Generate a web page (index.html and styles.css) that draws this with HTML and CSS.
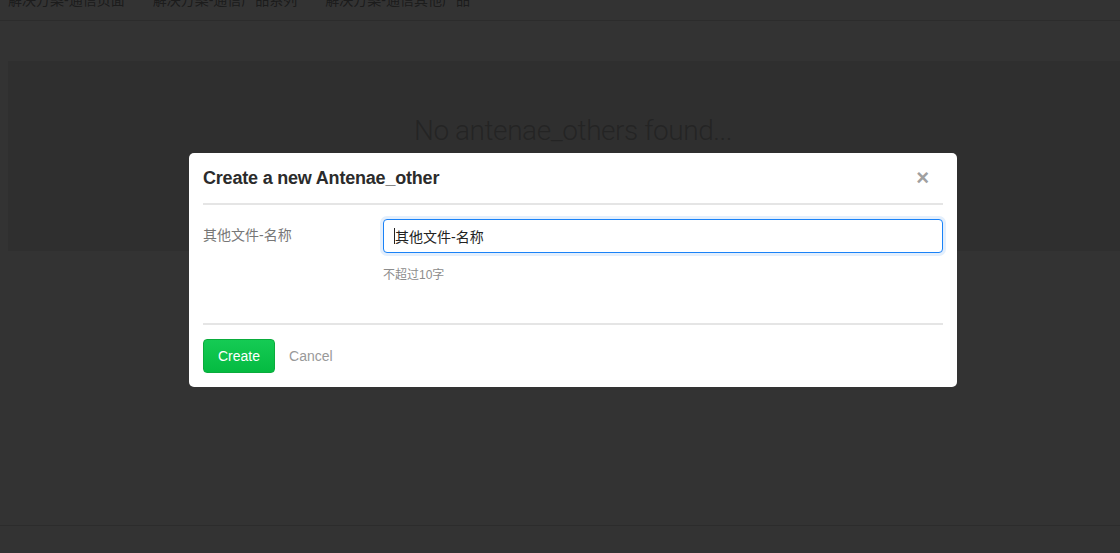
FILE: index.html
```html
<!DOCTYPE html>
<html lang="zh">
<head>
<meta charset="utf-8">
<title>Antenae_others</title>
<link rel="stylesheet" href="styles.css">
</head>
<body>
<div class="page">
  <nav class="topnav">
    <a class="nav-link" href="#">解决方案-通信页面</a>
    <a class="nav-link" href="#">解决方案-通信产品系列</a>
    <a class="nav-link" href="#">解决方案-通信其他产品</a>
  </nav>
  <main class="content">
    <div class="empty-panel">
      <h2 class="empty-title">No antenae_others found...</h2>
    </div>
  </main>
  <footer class="site-footer"></footer>
</div>

<div class="backdrop"></div>

<div class="modal-layer">
  <div class="modal">
    <div class="modal-header">
      <h3 class="modal-title">Create a new Antenae_other</h3>
      <button class="modal-close" type="button" aria-label="Close">×</button>
    </div>
    <div class="modal-body">
      <div class="form-row">
        <label class="form-label" for="name">其他文件-名称</label>
        <div class="form-field">
          <div class="input-wrap">
            <span class="caret"></span>
            <input id="name" class="form-input is-focused" type="text" value="其他文件-名称">
          </div>
          <p class="help-text">不超过10字</p>
        </div>
      </div>
    </div>
    <div class="modal-footer">
      <button class="btn-create" type="button">Create</button>
      <a class="btn-cancel" href="#">Cancel</a>
    </div>
  </div>
</div>
</body>
</html>
```
FILE: styles.css
```css
html, body {
  margin: 0;
  padding: 0;
  overflow: hidden;
  background: #fff;
}

body {
  font-family: "Liberation Sans", Arial, "Noto Sans CJK SC", sans-serif;
  font-size: 14px;
  color: #333;
}

.page {
  width: 1146px;
  height: 553px;
  display: flex;
  flex-direction: column;
}

.topnav {
  display: flex;
  gap: 28px;
  margin-top: -10px;
  height: 31px;
  padding-left: 8px;
  border-bottom: 1px solid #dcdcdc;
  box-sizing: border-box;
  line-height: 20px;
}

.nav-link {
  color: #8a8a8a;
  text-decoration: none;
  font-size: 14px;
}

.content {
  flex: 1;
}

.empty-panel {
  margin: 40px 8px 0;
  height: 190px;
  box-sizing: border-box;
  padding-top: 50px;
  background: #ececec;
  text-align: center;
}

.empty-title {
  margin: 0;
  font-family: Roboto, "Liberation Sans", sans-serif;
  font-weight: 300;
  font-size: 28px;
  line-height: 40px;
  color: #b4b4b4;
  letter-spacing: -0.45px;
}

.site-footer {
  height: 27px;
  border-top: 1px solid #dcdcdc;
}

.backdrop {
  position: fixed;
  inset: 0;
  background: rgba(0, 0, 0, 0.8);
}

.modal-layer {
  position: fixed;
  top: 0;
  left: 0;
  width: 1146px;
  height: 553px;
}

.modal {
  width: 768px;
  margin: 153px auto 0;
  background: #fff;
  border-radius: 5px;
  padding: 0 14px;
  box-sizing: border-box;
}

.modal-header {
  height: 52px;
  display: flex;
  align-items: center;
  justify-content: space-between;
  border-bottom: 2px solid #e5e5e5;
  box-sizing: border-box;
}

.modal-title {
  margin: 0;
  font-size: 18px;
  font-weight: bold;
  color: #2b2b2b;
  line-height: 26px;
  letter-spacing: -0.2px;
}

.modal-close {
  border: 0;
  background: none;
  padding: 0 14px 0 0;
  font-family: "Liberation Sans", Arial, sans-serif;
  font-size: 22px;
  font-weight: bold;
  line-height: 1;
  color: #a0a0a0;
  cursor: pointer;
}

.modal-body {
  padding: 14px 0 39px;
}

.form-row {
  display: grid;
  grid-template-columns: 180px 1fr;
}

.form-label {
  line-height: 33px;
  color: #777;
  font-size: 14px;
}

.input-wrap {
  position: relative;
}

.form-input {
  display: block;
  width: 100%;
  height: 34px;
  box-sizing: border-box;
  padding: 0 11px;
  border: 1px solid #1a82f7;
  border-radius: 4px;
  font-family: "Liberation Sans", Arial, "Noto Sans CJK SC", sans-serif;
  font-size: 14px;
  color: #222;
  outline: none;
}

.form-input.is-focused {
  box-shadow: 0 0 0 3px #e4effc;
}

.caret {
  position: absolute;
  left: 11px;
  top: 9px;
  width: 1px;
  height: 16px;
  background: #222;
}

.help-text {
  margin: 14px 0 0;
  font-size: 12px;
  line-height: 17px;
  color: #8c8c8c;
}

.modal-footer {
  border-top: 2px solid #e5e5e5;
  padding: 14px 0;
  display: flex;
  align-items: center;
}

.btn-create {
  height: 34px;
  padding: 0 14px;
  border: 1px solid #0aac3c;
  border-radius: 4px;
  background: linear-gradient(#15cb54, #05bb41);
  color: #fff;
  font-family: "Liberation Sans", Arial, sans-serif;
  font-size: 14px;
  cursor: pointer;
}

.btn-cancel {
  margin-left: 14px;
  color: #999;
  text-decoration: none;
  font-size: 14px;
}
```
